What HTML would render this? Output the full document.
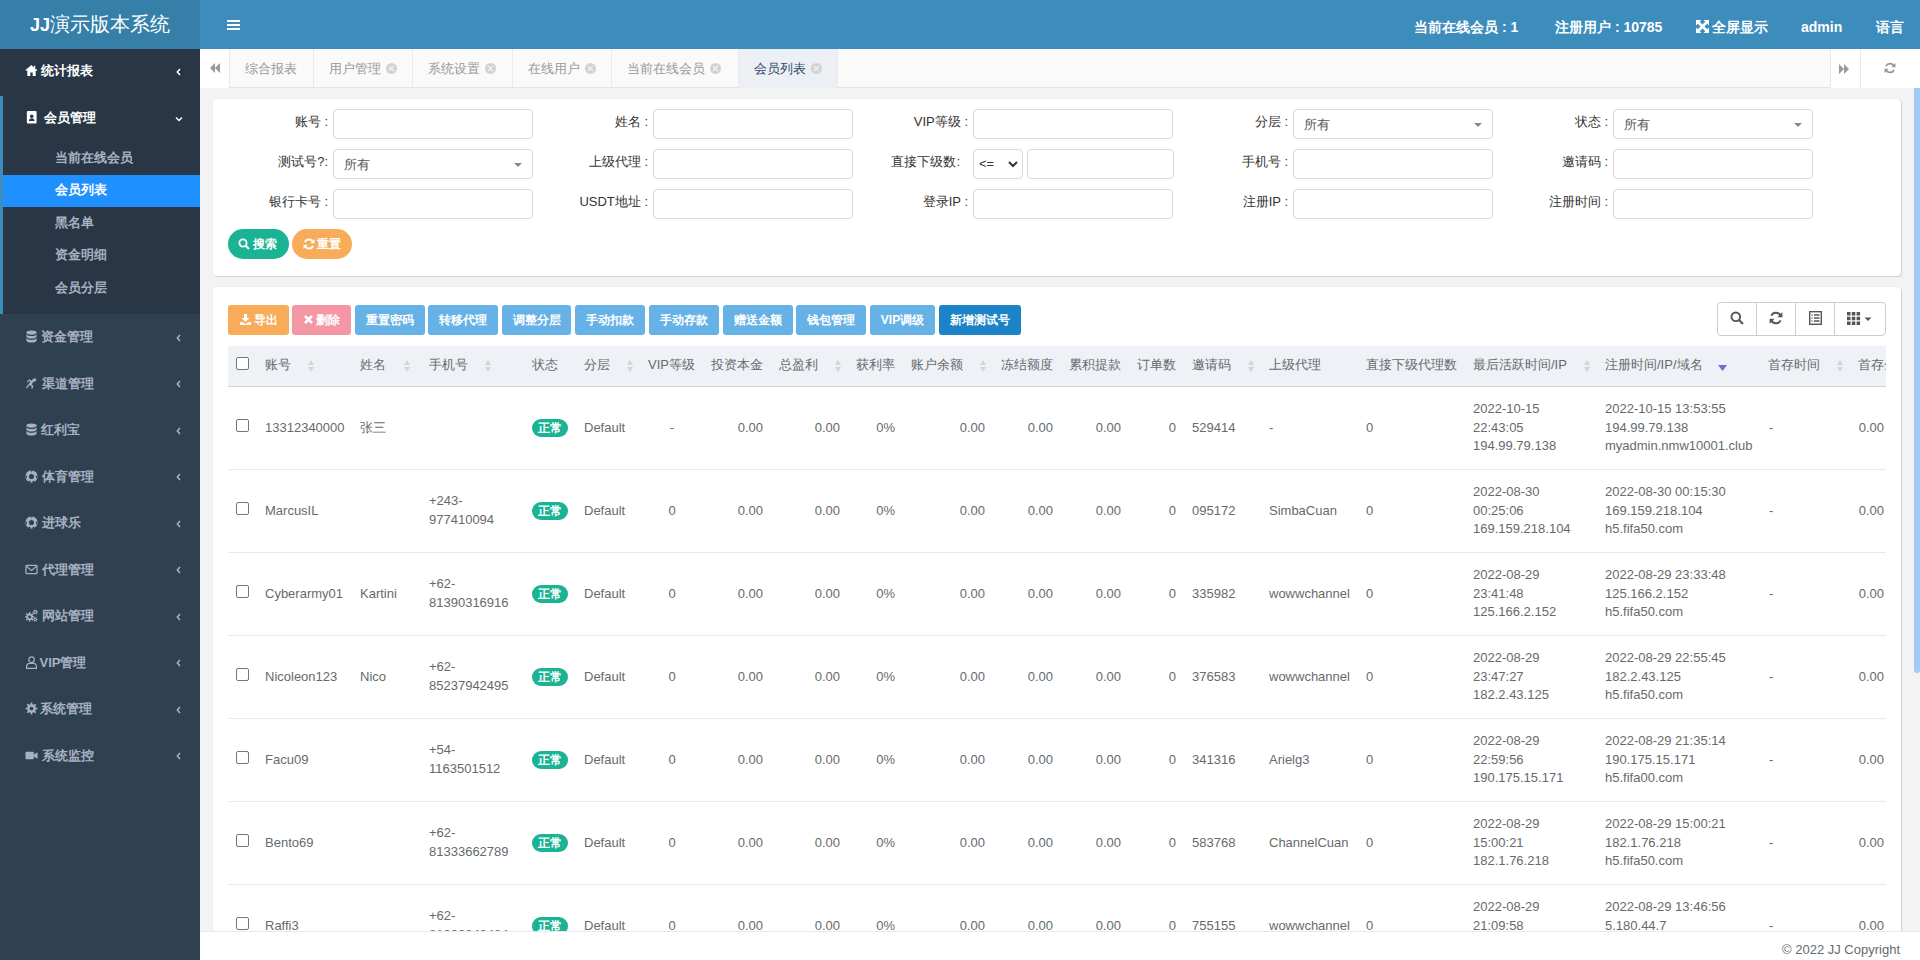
<!DOCTYPE html><html><head><meta charset="utf-8"><title>会员列表</title><style>
*{box-sizing:border-box;margin:0;padding:0}
html,body{width:1920px;height:960px;overflow:hidden;background:#f3f3f4}
body{position:relative;font-family:"Liberation Sans",sans-serif;font-size:13px;color:#676a6c;line-height:1.42857}
.a{position:absolute}
#logo{left:0;top:0;width:200px;height:49px;background:#367fa9;color:#fff;font-size:20px;line-height:49px;text-align:center;white-space:nowrap}
#logo b{font-weight:bold;font-size:18px;letter-spacing:0px}
#nav{left:200px;top:0;width:1720px;height:49px;background:#3c8dbc}
.nt{color:#fff;font-weight:bold;font-size:14px;top:17px;line-height:20px;white-space:nowrap}
#side{left:0;top:49px;width:200px;height:911px;background:#2f4050}
#sdark{left:0;top:49px;width:200px;height:265px;background:#283646}
#sbord{left:0;top:96px;width:3px;height:218px;background:#3c8dbc}
#sact{left:3px;top:174.5px;width:197px;height:32.5px;background:#1e90ff}
.mi{left:0;width:200px;color:#a7b1c2;font-weight:bold;font-size:13px;line-height:20px;white-space:nowrap}
.mi .ic{position:absolute;left:25px;top:3px;width:13px;height:13px}
.mi .tx{position:absolute;left:41px;top:0}
.mi .ar{position:absolute;left:174px;top:5.5px;width:10px;height:10px}
.sub{left:55px;color:#a7b1c2;font-size:13px;line-height:20px;white-space:nowrap;font-weight:bold}
#tabs{left:200px;top:49px;width:1720px;height:39px;background:#fafafa;border-bottom:1px solid #e4e4e4}
.tab{top:49px;height:39px;border-left:1px solid #eaeaea;color:#999;font-size:13px;line-height:39px;white-space:nowrap;padding-left:15px}
.tab .x{display:inline-block;width:11px;height:11px;border-radius:50%;background:#d2d2d2;position:relative;top:1px;margin-left:5px}
.tab .x:before,.tab .x:after{content:"";position:absolute;left:5px;top:2px;width:1.4px;height:7px;background:#fafafa;transform:rotate(45deg)}
.tab .x:after{transform:rotate(-45deg)}
#cont{left:200px;top:88px;width:1720px;height:843px;background:#f3f3f4;overflow:hidden}
.box{background:#fff;border-radius:4px;box-shadow:1px 1px 1px rgba(0,0,0,.13),0 0 1px rgba(0,0,0,.12)}
.lbl{color:#333;font-size:13px;line-height:20px;text-align:right;white-space:nowrap}
.inp{height:30px;border:1px solid #d9d9d9;border-radius:4px;background:#fff}
.sel{color:#555;font-size:13px;line-height:30px;padding-left:10px}
.sel i{position:absolute;right:10px;top:13px;width:0;height:0;border-left:4px solid transparent;border-right:4px solid transparent;border-top:4px solid #888}
.pill{height:30px;border-radius:15px;color:#fff;font-weight:bold;font-size:12px;line-height:30px;white-space:nowrap}
.btn{top:305px;height:30px;border-radius:3px;color:#fff;font-size:12px;line-height:30px;text-align:center;white-space:nowrap;font-weight:bold}
.info{background:#66b2e6}
.th{top:346px;height:41px;line-height:20px;color:#676a6c;white-space:nowrap}
.srt{width:7px;height:13px;top:360px}
.srt:before{content:"";position:absolute;left:0;top:0;border-left:3.5px solid transparent;border-right:3.5px solid transparent;border-bottom:5px solid #d4d4d4}
.srt:after{content:"";position:absolute;left:0;top:7px;border-left:3.5px solid transparent;border-right:3.5px solid transparent;border-top:5px solid #d4d4d4}
.td{white-space:nowrap;line-height:18.57px;color:#676a6c}
.r{text-align:right}
.cb{width:13px;height:13px;border:1px solid #767676;border-radius:2px;background:#fff}
.bdg{width:36px;height:18px;border-radius:9px;background:#1ab394;color:#fff;font-weight:bold;font-size:12px;line-height:18px;text-align:center}
.sep{left:228px;width:1658px;height:1px;background:#e7eaec}
</style></head><body><div id="logo" class="a"><b>JJ</b>演示版本系统</div>
<div id="nav" class="a"></div>
<div class="a" style="left:227px;top:20px;width:13px;height:2px;background:#fff"></div>
<div class="a" style="left:227px;top:24px;width:13px;height:2px;background:#fff"></div>
<div class="a" style="left:227px;top:28px;width:13px;height:2px;background:#fff"></div>
<div class="a nt" style="left:1414px">当前在线会员 : 1</div>
<div class="a nt" style="left:1555px">注册用户 : 10785</div>
<div class="a nt" style="left:1696px"><span style="display:inline-block;width:13px;height:13px;position:relative;top:1px;margin-right:3px"><svg width="13" height="13" viewBox="0 0 13 13"><path d="M0 0h5.5L0 5.5zM13 0v5.5L7.5 0zM0 13V7.5L5.5 13zM13 13H7.5L13 7.5z" fill="#fff"/><path d="M2 2l9 9M11 2 2 11" stroke="#fff" stroke-width="2.8"/></svg></span>全屏显示</div>
<div class="a nt" style="left:1801px">admin</div>
<div class="a nt" style="left:1876px">语言</div>
<div id="side" class="a"></div><div id="sdark" class="a"></div><div id="sbord" class="a"></div><div id="sact" class="a"></div>
<div class="a mi" style="top:61px;color:#fff"><svg class="ic" viewBox="0 0 14 14"><path d="M7 1 0.5 6.5 1.5 7.5 2.5 6.7V13h3.2V9.2h2.6V13h3.2V6.7l1 .8 1-1L11 5V2H9.5v1.7z" fill="#fff"/></svg><span class="tx" style="left:41px">统计报表</span><svg class="ar" viewBox="0 0 10 10"><path d="M6 2 3.3 5 6 8" stroke="#fff" stroke-width="1.5" fill="none"/></svg></div>
<div class="a mi" style="top:108px;color:#fff"><svg class="ic" viewBox="0 0 14 14"><rect x="2" y="0" width="10.5" height="13.5" rx="1.2" fill="#fff"/><circle cx="7.25" cy="5.6" r="1.9" fill="#283646"/><path d="M4.2 10.8c0-2 1.3-3 3.05-3s3.05 1 3.05 3z" fill="#283646"/></svg><span class="tx" style="left:44px">会员管理</span><svg class="ar" viewBox="0 0 10 10"><path d="M2 3.5 5 6.5l3-3" stroke="#fff" stroke-width="1.5" fill="none"/></svg></div>
<div class="a sub" style="top:148px;color:#a7b1c2">当前在线会员</div>
<div class="a sub" style="top:180px;color:#fff">会员列表</div>
<div class="a sub" style="top:213px;color:#a7b1c2">黑名单</div>
<div class="a sub" style="top:245px;color:#a7b1c2">资金明细</div>
<div class="a sub" style="top:278px;color:#a7b1c2">会员分层</div>
<div class="a mi" style="top:327.00px"><svg class="ic" viewBox="0 0 14 14"><ellipse cx="7" cy="2.8" rx="5.5" ry="2.2" fill="#a7b1c2"/><path d="M1.5 4.2c0 1.2 2.5 2.2 5.5 2.2s5.5-1 5.5-2.2V7c0 1.2-2.5 2.2-5.5 2.2S1.5 8.2 1.5 7z" fill="#a7b1c2"/><path d="M1.5 8.4c0 1.2 2.5 2.2 5.5 2.2s5.5-1 5.5-2.2v2.8c0 1.2-2.5 2.2-5.5 2.2s-5.5-1-5.5-2.2z" fill="#a7b1c2"/></svg><span class="tx" style="left:40.5px">资金管理</span><svg class="ar" viewBox="0 0 10 10"><path d="M6 2 3.3 5 6 8" stroke="#a7b1c2" stroke-width="1.5" fill="none"/></svg></div>
<div class="a mi" style="top:373.55px"><svg class="ic" viewBox="0 0 14 14"><path d="M9 1.5 12.5 2 11 5.5 9.5 4.5 7 8l2 1.5-1 3.5-1.3-.4.6-2.4L5 8.5 2 12.5 1 11.7 5.5 5.5 4.5 4 2.5 6 1.7 5.2 4.5 2.5 7 4z" fill="#a7b1c2"/></svg><span class="tx" style="left:42px">渠道管理</span><svg class="ar" viewBox="0 0 10 10"><path d="M6 2 3.3 5 6 8" stroke="#a7b1c2" stroke-width="1.5" fill="none"/></svg></div>
<div class="a mi" style="top:420.10px"><svg class="ic" viewBox="0 0 14 14"><ellipse cx="7" cy="2.8" rx="5.5" ry="2.2" fill="#a7b1c2"/><path d="M1.5 4.2c0 1.2 2.5 2.2 5.5 2.2s5.5-1 5.5-2.2V7c0 1.2-2.5 2.2-5.5 2.2S1.5 8.2 1.5 7z" fill="#a7b1c2"/><path d="M1.5 8.4c0 1.2 2.5 2.2 5.5 2.2s5.5-1 5.5-2.2v2.8c0 1.2-2.5 2.2-5.5 2.2s-5.5-1-5.5-2.2z" fill="#a7b1c2"/></svg><span class="tx" style="left:40.5px">红利宝</span><svg class="ar" viewBox="0 0 10 10"><path d="M6 2 3.3 5 6 8" stroke="#a7b1c2" stroke-width="1.5" fill="none"/></svg></div>
<div class="a mi" style="top:466.65px"><svg class="ic" viewBox="0 0 14 14"><circle cx="7" cy="7" r="6.6" fill="#a7b1c2"/><path d="M7 3.9 10 6.1 8.85 9.6H5.15L4 6.1z" fill="#2f4050"/><path d="M5 .7 7 2 9 .7A6.6 6.6 0 0 0 5 .7zM13.3 5.5 11.7 6.6 12.3 9.7A6.6 6.6 0 0 0 13.3 5.5zM10.6 12.6 8.8 11.4 7.6 13.5A6.6 6.6 0 0 0 10.6 12.6zM3.4 12.6 5.2 11.4 6.4 13.5A6.6 6.6 0 0 1 3.4 12.6zM.7 5.5 2.3 6.6 1.7 9.7A6.6 6.6 0 0 1 .7 5.5z" fill="#2f4050"/></svg><span class="tx" style="left:42px">体育管理</span><svg class="ar" viewBox="0 0 10 10"><path d="M6 2 3.3 5 6 8" stroke="#a7b1c2" stroke-width="1.5" fill="none"/></svg></div>
<div class="a mi" style="top:513.20px"><svg class="ic" viewBox="0 0 14 14"><circle cx="7" cy="7" r="6.6" fill="#a7b1c2"/><path d="M7 3.9 10 6.1 8.85 9.6H5.15L4 6.1z" fill="#2f4050"/><path d="M5 .7 7 2 9 .7A6.6 6.6 0 0 0 5 .7zM13.3 5.5 11.7 6.6 12.3 9.7A6.6 6.6 0 0 0 13.3 5.5zM10.6 12.6 8.8 11.4 7.6 13.5A6.6 6.6 0 0 0 10.6 12.6zM3.4 12.6 5.2 11.4 6.4 13.5A6.6 6.6 0 0 1 3.4 12.6zM.7 5.5 2.3 6.6 1.7 9.7A6.6 6.6 0 0 1 .7 5.5z" fill="#2f4050"/></svg><span class="tx" style="left:42px">进球乐</span><svg class="ar" viewBox="0 0 10 10"><path d="M6 2 3.3 5 6 8" stroke="#a7b1c2" stroke-width="1.5" fill="none"/></svg></div>
<div class="a mi" style="top:559.75px"><svg class="ic" viewBox="0 0 14 14"><rect x="1" y="2.5" width="12" height="9" rx="1" fill="none" stroke="#a7b1c2" stroke-width="1.3"/><path d="M1.5 3.5 7 8l5.5-4.5" fill="none" stroke="#a7b1c2" stroke-width="1.3"/></svg><span class="tx" style="left:42px">代理管理</span><svg class="ar" viewBox="0 0 10 10"><path d="M6 2 3.3 5 6 8" stroke="#a7b1c2" stroke-width="1.5" fill="none"/></svg></div>
<div class="a mi" style="top:606.30px"><svg class="ic" viewBox="0 0 14 14"><path d="M8.63 7.78 10.15 7.79 10.15 9.21 8.63 9.22 8.08 10.56 9.15 11.64 8.14 12.65 7.06 11.58 5.72 12.13 5.71 13.65 4.29 13.65 4.28 12.13 2.94 11.58 1.86 12.65 0.85 11.64 1.92 10.56 1.37 9.22 -0.15 9.21 -0.15 7.79 1.37 7.78 1.92 6.44 0.85 5.36 1.86 4.35 2.94 5.42 4.28 4.87 4.29 3.35 5.71 3.35 5.72 4.87 7.06 5.42 8.14 4.35 9.15 5.36 8.08 6.44z" fill="#a7b1c2"/><circle cx="5" cy="8.5" r="1.6" fill="#2f4050"/><path d="M12.93 2.68 13.85 2.67 13.85 3.73 12.93 3.72 12.41 4.61 12.88 5.41 11.97 5.93 11.52 5.13 10.48 5.13 10.03 5.93 9.12 5.41 9.59 4.61 9.07 3.72 8.15 3.73 8.15 2.67 9.07 2.68 9.59 1.79 9.12 0.99 10.03 0.47 10.48 1.27 11.52 1.27 11.97 0.47 12.88 0.99 12.41 1.79z" fill="#a7b1c2"/><circle cx="11" cy="3.2" r="0.9" fill="#2f4050"/><path d="M12.74 10.73 13.56 10.73 13.56 11.67 12.74 11.67 12.27 12.47 12.69 13.18 11.87 13.65 11.47 12.94 10.53 12.94 10.13 13.65 9.31 13.18 9.73 12.47 9.26 11.67 8.44 11.67 8.44 10.73 9.26 10.73 9.73 9.93 9.31 9.22 10.13 8.75 10.53 9.46 11.47 9.46 11.87 8.75 12.69 9.22 12.27 9.93z" fill="#a7b1c2"/><circle cx="11" cy="11.2" r="0.8" fill="#2f4050"/></svg><span class="tx" style="left:42px">网站管理</span><svg class="ar" viewBox="0 0 10 10"><path d="M6 2 3.3 5 6 8" stroke="#a7b1c2" stroke-width="1.5" fill="none"/></svg></div>
<div class="a mi" style="top:652.85px"><svg class="ic" viewBox="0 0 14 14"><circle cx="7" cy="4" r="3" fill="none" stroke="#a7b1c2" stroke-width="1.3"/><path d="M1.7 13.3v-2.2a3.2 3.2 0 0 1 3.2-3.2h4.2a3.2 3.2 0 0 1 3.2 3.2v2.2z" fill="none" stroke="#a7b1c2" stroke-width="1.3"/></svg><span class="tx" style="left:39.5px">VIP管理</span><svg class="ar" viewBox="0 0 10 10"><path d="M6 2 3.3 5 6 8" stroke="#a7b1c2" stroke-width="1.5" fill="none"/></svg></div>
<div class="a mi" style="top:699.40px"><svg class="ic" viewBox="0 0 14 14"><path d="M11.71 6.06 13.44 6.11 13.44 7.89 11.71 7.94 10.99 9.67 12.18 10.92 10.92 12.18 9.67 10.99 7.94 11.71 7.89 13.44 6.11 13.44 6.06 11.71 4.33 10.99 3.08 12.18 1.82 10.92 3.01 9.67 2.29 7.94 0.56 7.89 0.56 6.11 2.29 6.06 3.01 4.33 1.82 3.08 3.08 1.82 4.33 3.01 6.06 2.29 6.11 0.56 7.89 0.56 7.94 2.29 9.67 3.01 10.92 1.82 12.18 3.08 10.99 4.33z" fill="#a7b1c2"/><circle cx="7" cy="7" r="2.0" fill="#2f4050"/></svg><span class="tx" style="left:40px">系统管理</span><svg class="ar" viewBox="0 0 10 10"><path d="M6 2 3.3 5 6 8" stroke="#a7b1c2" stroke-width="1.5" fill="none"/></svg></div>
<div class="a mi" style="top:745.95px"><svg class="ic" viewBox="0 0 14 14"><rect x="0.5" y="3" width="9" height="8" rx="1" fill="#a7b1c2"/><path d="M9.5 6 13.5 3.5v7L9.5 8z" fill="#a7b1c2"/></svg><span class="tx" style="left:42px">系统监控</span><svg class="ar" viewBox="0 0 10 10"><path d="M6 2 3.3 5 6 8" stroke="#a7b1c2" stroke-width="1.5" fill="none"/></svg></div>
<div id="tabs" class="a"></div>
<div class="a" style="left:200px;top:49px;width:29px;height:39px;background:#fff"></div>
<svg class="a" style="left:209px;top:62px" width="12" height="12" viewBox="0 0 12 12"><path d="M6 1 1 6l5 5zM11 1 6 6l5 5z" fill="#999"/></svg>
<div class="a tab" style="left:229px;width:84px;">综合报表</div>
<div class="a tab" style="left:313px;width:99px;">用户管理<span class="x"></span></div>
<div class="a tab" style="left:412px;width:100px;">系统设置<span class="x"></span></div>
<div class="a tab" style="left:512px;width:99px;">在线用户<span class="x"></span></div>
<div class="a tab" style="left:611px;width:127px;">当前在线会员<span class="x"></span></div>
<div class="a tab" style="left:738px;width:99px;background:#eceff3;color:#2e4b70;">会员列表<span class="x"></span></div>
<div class="a" style="left:837px;top:49px;width:1px;height:39px;background:#eaeaea"></div>
<div class="a" style="left:1830px;top:49px;width:90px;height:39px;background:#fff;border-left:1px solid #eaeaea"></div>
<div class="a" style="left:1860px;top:49px;width:1px;height:39px;background:#eaeaea"></div>
<svg class="a" style="left:1838px;top:63px" width="12" height="12" viewBox="0 0 12 12"><path d="M1 1l5 5-5 5zM6 1l5 5-5 5z" fill="#999"/></svg>
<svg class="a" style="left:1884px;top:62px" width="12" height="12" viewBox="0 0 12 12"><path d="M10.2 4.5A4.5 4.5 0 0 0 2 4M1.8 7.5A4.5 4.5 0 0 0 10 8" stroke="#999" stroke-width="1.8" fill="none"/><path d="M11.5 1v4.2H7.3zM.5 11V6.8h4.2z" fill="#999"/></svg>
<div id="cont" class="a"></div>
<div class="a box" style="left:213px;top:99px;width:1688px;height:177px"></div>
<div class="a lbl" style="left:213px;width:115px;top:111.8px">账号 :</div>
<div class="a inp" style="left:333px;top:109px;width:200px"></div>
<div class="a lbl" style="left:533px;width:115px;top:111.8px">姓名 :</div>
<div class="a inp" style="left:653px;top:109px;width:200px"></div>
<div class="a lbl" style="left:853px;width:115px;top:111.8px">VIP等级 :</div>
<div class="a inp" style="left:973px;top:109px;width:200px"></div>
<div class="a lbl" style="left:1173px;width:115px;top:111.8px">分层 :</div>
<div class="a inp sel" style="left:1293px;top:109px;width:200px">所有<i></i></div>
<div class="a lbl" style="left:1493px;width:115px;top:111.8px">状态 :</div>
<div class="a inp sel" style="left:1613px;top:109px;width:200px">所有<i></i></div>
<div class="a lbl" style="left:213px;width:115px;top:151.8px">测试号?:</div>
<div class="a inp sel" style="left:333px;top:149px;width:200px">所有<i></i></div>
<div class="a lbl" style="left:533px;width:115px;top:151.8px">上级代理 :</div>
<div class="a inp" style="left:653px;top:149px;width:200px"></div>
<div class="a lbl" style="left:853px;width:107px;top:151.8px">直接下级数:</div>
<div class="a inp" style="left:973px;top:149px;width:50px;font-size:13px;color:#333;line-height:28px;padding-left:5px">&lt;=<svg style="position:absolute;left:34px;top:10px" width="10" height="8" viewBox="0 0 10 8"><path d="M1 2l4 4 4-4" stroke="#333" stroke-width="2" fill="none"/></svg></div>
<div class="a inp" style="left:1027px;top:149px;width:147px"></div>
<div class="a lbl" style="left:1173px;width:115px;top:151.8px">手机号 :</div>
<div class="a inp" style="left:1293px;top:149px;width:200px"></div>
<div class="a lbl" style="left:1493px;width:115px;top:151.8px">邀请码 :</div>
<div class="a inp" style="left:1613px;top:149px;width:200px"></div>
<div class="a lbl" style="left:213px;width:115px;top:191.8px">银行卡号 :</div>
<div class="a inp" style="left:333px;top:189px;width:200px"></div>
<div class="a lbl" style="left:533px;width:115px;top:191.8px">USDT地址 :</div>
<div class="a inp" style="left:653px;top:189px;width:200px"></div>
<div class="a lbl" style="left:853px;width:115px;top:191.8px">登录IP :</div>
<div class="a inp" style="left:973px;top:189px;width:200px"></div>
<div class="a lbl" style="left:1173px;width:115px;top:191.8px">注册IP :</div>
<div class="a inp" style="left:1293px;top:189px;width:200px"></div>
<div class="a lbl" style="left:1493px;width:115px;top:191.8px">注册时间 :</div>
<div class="a inp" style="left:1613px;top:189px;width:200px"></div>
<div class="a pill" style="left:228px;top:229px;width:61px;background:#1ab394"><svg style="position:absolute;left:10px;top:9px" width="12" height="12" viewBox="0 0 12 12"><circle cx="5" cy="5" r="3.6" stroke="#fff" stroke-width="1.8" fill="none"/><path d="M7.5 7.5 11 11" stroke="#fff" stroke-width="2"/></svg><span style="position:absolute;left:25px">搜索</span></div>
<div class="a pill" style="left:292px;top:229px;width:60px;background:#f8ac59"><svg style="position:absolute;left:11px;top:9px" width="12" height="12" viewBox="0 0 12 12"><path d="M10.2 4.5A4.5 4.5 0 0 0 2 4M1.8 7.5A4.5 4.5 0 0 0 10 8" stroke="#fff" stroke-width="2" fill="none"/><path d="M11.5 1v4.2H7.3zM.5 11V6.8h4.2z" fill="#fff"/></svg><span style="position:absolute;left:25px">重置</span></div>
<div class="a box" style="left:213px;top:287px;width:1688px;height:700px"></div>
<div class="a btn" style="left:228px;width:61px;background:#f8ac59;"><svg style="display:inline-block;vertical-align:-1px;margin-right:3px" width="11" height="11" viewBox="0 0 11 11"><path d="M4 0h3v4h2.5L5.5 8 1.5 4H4zM0 8h2.5l3 2 3-2H11v3H0z" fill="#fff"/></svg>导出</div>
<div class="a btn" style="left:292px;width:59px;background:#f496a3;"><svg style="display:inline-block;vertical-align:0px;margin-right:3px" width="9" height="9" viewBox="0 0 9 9"><path d="M1 1l7 7M8 1 1 8" stroke="#fff" stroke-width="2.6"/></svg>删除</div>
<div class="a btn info" style="left:355px;width:70px;">重置密码</div>
<div class="a btn info" style="left:428px;width:70px;">转移代理</div>
<div class="a btn info" style="left:502px;width:69px;">调整分层</div>
<div class="a btn info" style="left:575px;width:70px;">手动扣款</div>
<div class="a btn info" style="left:649px;width:70px;">手动存款</div>
<div class="a btn info" style="left:723px;width:70px;">赠送金额</div>
<div class="a btn info" style="left:796px;width:70px;">钱包管理</div>
<div class="a btn info" style="left:870px;width:65px;">VIP调级</div>
<div class="a btn" style="left:939px;width:82px;background:#1c84c6;">新增测试号</div>
<div class="a" style="left:1717px;top:302px;width:169px;height:34px;border:1px solid #ccc;border-radius:4px;background:#fff"></div>
<div class="a" style="left:1756px;top:303px;width:1px;height:32px;background:#ccc"></div>
<div class="a" style="left:1795px;top:303px;width:1px;height:32px;background:#ccc"></div>
<div class="a" style="left:1834px;top:303px;width:1px;height:32px;background:#ccc"></div>
<svg class="a" style="left:1730px;top:311px" width="14" height="14" viewBox="0 0 14 14"><circle cx="5.8" cy="5.8" r="4.3" stroke="#555" stroke-width="1.9" fill="none"/><path d="M9 9l4 4" stroke="#555" stroke-width="2.2"/></svg>
<svg class="a" style="left:1769px;top:311px" width="14" height="14" viewBox="0 0 14 14"><path d="M11.8 5.2A5.2 5.2 0 0 0 2.3 4.6M2.2 8.8A5.2 5.2 0 0 0 11.7 9.4" stroke="#555" stroke-width="2" fill="none"/><path d="M13.4 1.2v5H8.4zM.6 12.8v-5h5z" fill="#555"/></svg>
<svg class="a" style="left:1809px;top:311px" width="13" height="14" viewBox="0 0 13 14"><rect x=".7" y=".7" width="11.6" height="12.6" fill="none" stroke="#555" stroke-width="1.4"/><path d="M2.5 4h1M5 4h5.5M2.5 7h1M5 7h5.5M2.5 10h1M5 10h5.5" stroke="#555" stroke-width="1.3"/></svg>
<svg class="a" style="left:1847px;top:312px" width="28" height="13" viewBox="0 0 28 13"><path d="M0 0h3.5v3.5H0zM4.8 0h3.5v3.5H4.8zM9.6 0h3.5v3.5H9.6zM0 4.8h3.5v3.5H0zM4.8 4.8h3.5v3.5H4.8zM9.6 4.8h3.5v3.5H9.6zM0 9.6h3.5v3.5H0zM4.8 9.6h3.5v3.5H4.8zM9.6 9.6h3.5v3.5H9.6z" fill="#555"/><path d="M17.5 5.5h7l-3.5 3.5z" fill="#555"/></svg>
<div class="a" style="left:228px;top:346px;width:1658px;height:585px;overflow:hidden">
<div class="a" style="left:0px;top:0px;width:1658px;height:41px;background:#eef1f6;border-bottom:1px solid #d2d5d9"></div>
<div class="a cb" style="left:8px;top:11px"></div>
<div class="a th" style="left:37px;top:9px">账号</div>
<div class="a srt" style="left:80px;top:14px"></div>
<div class="a th" style="left:132px;top:9px">姓名</div>
<div class="a srt" style="left:176px;top:14px"></div>
<div class="a th" style="left:201px;top:9px">手机号</div>
<div class="a srt" style="left:257px;top:14px"></div>
<div class="a th" style="left:304px;top:9px">状态</div>
<div class="a th" style="left:356px;top:9px">分层</div>
<div class="a srt" style="left:399px;top:14px"></div>
<div class="a th" style="left:420px;top:9px">VIP等级</div>
<div class="a th" style="left:483px;top:9px">投资本金</div>
<div class="a th" style="left:551px;top:9px">总盈利</div>
<div class="a srt" style="left:607px;top:14px"></div>
<div class="a th" style="left:628px;top:9px">获利率</div>
<div class="a th" style="left:683px;top:9px">账户余额</div>
<div class="a srt" style="left:752px;top:14px"></div>
<div class="a th" style="left:773px;top:9px">冻结额度</div>
<div class="a th" style="left:841px;top:9px">累积提款</div>
<div class="a th" style="left:909px;top:9px">订单数</div>
<div class="a th" style="left:964px;top:9px">邀请码</div>
<div class="a srt" style="left:1020px;top:14px"></div>
<div class="a th" style="left:1041px;top:9px">上级代理</div>
<div class="a th" style="left:1138px;top:9px">直接下级代理数</div>
<div class="a th" style="left:1245px;top:9px">最后活跃时间/IP</div>
<div class="a srt" style="left:1356px;top:14px"></div>
<div class="a th" style="left:1377px;top:9px">注册时间/IP/域名</div>
<div class="a th" style="left:1540px;top:9px">首存时间</div>
<div class="a srt" style="left:1609px;top:14px"></div>
<div class="a th" style="left:1630px;top:9px">首存金额</div>
<svg class="a" style="left:1490px;top:18px" width="9" height="8" viewBox="0 0 9 8"><path d="M0 1h9L4.5 7z" fill="#6f6cd8"/></svg>
<div class="a cb" style="left:8px;top:73px"></div>
<div class="a td" style="left:37px;top:72.51499999999999px">13312340000</div>
<div class="a td" style="left:132px;top:72.51499999999999px">张三</div>
<div class="a bdg" style="left:304px;top:73px">正常</div>
<div class="a td" style="left:356px;top:72.51499999999999px">Default</div>
<div class="a td" style="left:394px;top:72.51499999999999px;width:100px;text-align:center">-</div>
<div class="a td r" style="left:435px;top:72.51499999999999px;width:100px">0.00</div>
<div class="a td r" style="left:512px;top:72.51499999999999px;width:100px">0.00</div>
<div class="a td r" style="left:567px;top:72.51499999999999px;width:100px">0%</div>
<div class="a td r" style="left:657px;top:72.51499999999999px;width:100px">0.00</div>
<div class="a td r" style="left:725px;top:72.51499999999999px;width:100px">0.00</div>
<div class="a td r" style="left:793px;top:72.51499999999999px;width:100px">0.00</div>
<div class="a td r" style="left:848px;top:72.51499999999999px;width:100px">0</div>
<div class="a td" style="left:964px;top:72.51499999999999px">529414</div>
<div class="a td" style="left:1041px;top:72.51499999999999px">-</div>
<div class="a td" style="left:1138px;top:72.51499999999999px">0</div>
<div class="a td" style="left:1245px;top:53.94499999999999px;">2022-10-15<br>22:43:05<br>194.99.79.138</div>
<div class="a td" style="left:1377px;top:53.94499999999999px;">2022-10-15 13:53:55<br>194.99.79.138<br>myadmin.nmw10001.club</div>
<div class="a td" style="left:1541px;top:72.51499999999999px">-</div>
<div class="a td r" style="left:1556px;top:72.51499999999999px;width:100px">0.00</div>
<div class="a sep" style="left:0px;top:123px"></div>
<div class="a cb" style="left:8px;top:156px"></div>
<div class="a td" style="left:37px;top:155.515px">MarcusIL</div>
<div class="a td" style="left:201px;top:146.23000000000002px;">+243-<br>977410094</div>
<div class="a bdg" style="left:304px;top:156px">正常</div>
<div class="a td" style="left:356px;top:155.515px">Default</div>
<div class="a td" style="left:394px;top:155.515px;width:100px;text-align:center">0</div>
<div class="a td r" style="left:435px;top:155.515px;width:100px">0.00</div>
<div class="a td r" style="left:512px;top:155.515px;width:100px">0.00</div>
<div class="a td r" style="left:567px;top:155.515px;width:100px">0%</div>
<div class="a td r" style="left:657px;top:155.515px;width:100px">0.00</div>
<div class="a td r" style="left:725px;top:155.515px;width:100px">0.00</div>
<div class="a td r" style="left:793px;top:155.515px;width:100px">0.00</div>
<div class="a td r" style="left:848px;top:155.515px;width:100px">0</div>
<div class="a td" style="left:964px;top:155.515px">095172</div>
<div class="a td" style="left:1041px;top:155.515px">SimbaCuan</div>
<div class="a td" style="left:1138px;top:155.515px">0</div>
<div class="a td" style="left:1245px;top:136.945px;">2022-08-30<br>00:25:06<br>169.159.218.104</div>
<div class="a td" style="left:1377px;top:136.945px;">2022-08-30 00:15:30<br>169.159.218.104<br>h5.fifa50.com</div>
<div class="a td" style="left:1541px;top:155.515px">-</div>
<div class="a td r" style="left:1556px;top:155.515px;width:100px">0.00</div>
<div class="a sep" style="left:0px;top:206px"></div>
<div class="a cb" style="left:8px;top:239px"></div>
<div class="a td" style="left:37px;top:238.515px">Cyberarmy01</div>
<div class="a td" style="left:132px;top:238.515px">Kartini</div>
<div class="a td" style="left:201px;top:229.2299999999999px;">+62-<br>81390316916</div>
<div class="a bdg" style="left:304px;top:239px">正常</div>
<div class="a td" style="left:356px;top:238.515px">Default</div>
<div class="a td" style="left:394px;top:238.515px;width:100px;text-align:center">0</div>
<div class="a td r" style="left:435px;top:238.515px;width:100px">0.00</div>
<div class="a td r" style="left:512px;top:238.515px;width:100px">0.00</div>
<div class="a td r" style="left:567px;top:238.515px;width:100px">0%</div>
<div class="a td r" style="left:657px;top:238.515px;width:100px">0.00</div>
<div class="a td r" style="left:725px;top:238.515px;width:100px">0.00</div>
<div class="a td r" style="left:793px;top:238.515px;width:100px">0.00</div>
<div class="a td r" style="left:848px;top:238.515px;width:100px">0</div>
<div class="a td" style="left:964px;top:238.515px">335982</div>
<div class="a td" style="left:1041px;top:238.515px">wowwchannel</div>
<div class="a td" style="left:1138px;top:238.515px">0</div>
<div class="a td" style="left:1245px;top:219.94499999999994px;">2022-08-29<br>23:41:48<br>125.166.2.152</div>
<div class="a td" style="left:1377px;top:219.94499999999994px;">2022-08-29 23:33:48<br>125.166.2.152<br>h5.fifa50.com</div>
<div class="a td" style="left:1541px;top:238.515px">-</div>
<div class="a td r" style="left:1556px;top:238.515px;width:100px">0.00</div>
<div class="a sep" style="left:0px;top:289px"></div>
<div class="a cb" style="left:8px;top:322px"></div>
<div class="a td" style="left:37px;top:321.515px">Nicoleon123</div>
<div class="a td" style="left:132px;top:321.515px">Nico</div>
<div class="a td" style="left:201px;top:312.2299999999999px;">+62-<br>85237942495</div>
<div class="a bdg" style="left:304px;top:322px">正常</div>
<div class="a td" style="left:356px;top:321.515px">Default</div>
<div class="a td" style="left:394px;top:321.515px;width:100px;text-align:center">0</div>
<div class="a td r" style="left:435px;top:321.515px;width:100px">0.00</div>
<div class="a td r" style="left:512px;top:321.515px;width:100px">0.00</div>
<div class="a td r" style="left:567px;top:321.515px;width:100px">0%</div>
<div class="a td r" style="left:657px;top:321.515px;width:100px">0.00</div>
<div class="a td r" style="left:725px;top:321.515px;width:100px">0.00</div>
<div class="a td r" style="left:793px;top:321.515px;width:100px">0.00</div>
<div class="a td r" style="left:848px;top:321.515px;width:100px">0</div>
<div class="a td" style="left:964px;top:321.515px">376583</div>
<div class="a td" style="left:1041px;top:321.515px">wowwchannel</div>
<div class="a td" style="left:1138px;top:321.515px">0</div>
<div class="a td" style="left:1245px;top:302.94499999999994px;">2022-08-29<br>23:47:27<br>182.2.43.125</div>
<div class="a td" style="left:1377px;top:302.94499999999994px;">2022-08-29 22:55:45<br>182.2.43.125<br>h5.fifa50.com</div>
<div class="a td" style="left:1541px;top:321.515px">-</div>
<div class="a td r" style="left:1556px;top:321.515px;width:100px">0.00</div>
<div class="a sep" style="left:0px;top:372px"></div>
<div class="a cb" style="left:8px;top:405px"></div>
<div class="a td" style="left:37px;top:404.515px">Facu09</div>
<div class="a td" style="left:201px;top:395.2299999999999px;">+54-<br>1163501512</div>
<div class="a bdg" style="left:304px;top:405px">正常</div>
<div class="a td" style="left:356px;top:404.515px">Default</div>
<div class="a td" style="left:394px;top:404.515px;width:100px;text-align:center">0</div>
<div class="a td r" style="left:435px;top:404.515px;width:100px">0.00</div>
<div class="a td r" style="left:512px;top:404.515px;width:100px">0.00</div>
<div class="a td r" style="left:567px;top:404.515px;width:100px">0%</div>
<div class="a td r" style="left:657px;top:404.515px;width:100px">0.00</div>
<div class="a td r" style="left:725px;top:404.515px;width:100px">0.00</div>
<div class="a td r" style="left:793px;top:404.515px;width:100px">0.00</div>
<div class="a td r" style="left:848px;top:404.515px;width:100px">0</div>
<div class="a td" style="left:964px;top:404.515px">341316</div>
<div class="a td" style="left:1041px;top:404.515px">Arielg3</div>
<div class="a td" style="left:1138px;top:404.515px">0</div>
<div class="a td" style="left:1245px;top:385.94499999999994px;">2022-08-29<br>22:59:56<br>190.175.15.171</div>
<div class="a td" style="left:1377px;top:385.94499999999994px;">2022-08-29 21:35:14<br>190.175.15.171<br>h5.fifa00.com</div>
<div class="a td" style="left:1541px;top:404.515px">-</div>
<div class="a td r" style="left:1556px;top:404.515px;width:100px">0.00</div>
<div class="a sep" style="left:0px;top:455px"></div>
<div class="a cb" style="left:8px;top:488px"></div>
<div class="a td" style="left:37px;top:487.515px">Bento69</div>
<div class="a td" style="left:201px;top:478.2299999999999px;">+62-<br>81333662789</div>
<div class="a bdg" style="left:304px;top:488px">正常</div>
<div class="a td" style="left:356px;top:487.515px">Default</div>
<div class="a td" style="left:394px;top:487.515px;width:100px;text-align:center">0</div>
<div class="a td r" style="left:435px;top:487.515px;width:100px">0.00</div>
<div class="a td r" style="left:512px;top:487.515px;width:100px">0.00</div>
<div class="a td r" style="left:567px;top:487.515px;width:100px">0%</div>
<div class="a td r" style="left:657px;top:487.515px;width:100px">0.00</div>
<div class="a td r" style="left:725px;top:487.515px;width:100px">0.00</div>
<div class="a td r" style="left:793px;top:487.515px;width:100px">0.00</div>
<div class="a td r" style="left:848px;top:487.515px;width:100px">0</div>
<div class="a td" style="left:964px;top:487.515px">583768</div>
<div class="a td" style="left:1041px;top:487.515px">ChannelCuan</div>
<div class="a td" style="left:1138px;top:487.515px">0</div>
<div class="a td" style="left:1245px;top:468.94499999999994px;">2022-08-29<br>15:00:21<br>182.1.76.218</div>
<div class="a td" style="left:1377px;top:468.94499999999994px;">2022-08-29 15:00:21<br>182.1.76.218<br>h5.fifa50.com</div>
<div class="a td" style="left:1541px;top:487.515px">-</div>
<div class="a td r" style="left:1556px;top:487.515px;width:100px">0.00</div>
<div class="a sep" style="left:0px;top:538px"></div>
<div class="a cb" style="left:8px;top:571px"></div>
<div class="a td" style="left:37px;top:570.515px">Raffi3</div>
<div class="a td" style="left:201px;top:561.2299999999999px;">+62-<br>81332842484</div>
<div class="a bdg" style="left:304px;top:571px">正常</div>
<div class="a td" style="left:356px;top:570.515px">Default</div>
<div class="a td" style="left:394px;top:570.515px;width:100px;text-align:center">0</div>
<div class="a td r" style="left:435px;top:570.515px;width:100px">0.00</div>
<div class="a td r" style="left:512px;top:570.515px;width:100px">0.00</div>
<div class="a td r" style="left:567px;top:570.515px;width:100px">0%</div>
<div class="a td r" style="left:657px;top:570.515px;width:100px">0.00</div>
<div class="a td r" style="left:725px;top:570.515px;width:100px">0.00</div>
<div class="a td r" style="left:793px;top:570.515px;width:100px">0.00</div>
<div class="a td r" style="left:848px;top:570.515px;width:100px">0</div>
<div class="a td" style="left:964px;top:570.515px">755155</div>
<div class="a td" style="left:1041px;top:570.515px">wowwchannel</div>
<div class="a td" style="left:1138px;top:570.515px">0</div>
<div class="a td" style="left:1245px;top:551.9449999999999px;">2022-08-29<br>21:09:58<br>5.180.44.7</div>
<div class="a td" style="left:1377px;top:551.9449999999999px;">2022-08-29 13:46:56<br>5.180.44.7<br>h5.fifa50.com</div>
<div class="a td" style="left:1541px;top:570.515px">-</div>
<div class="a td r" style="left:1556px;top:570.515px;width:100px">0.00</div>
<div class="a sep" style="left:0px;top:621px"></div>
</div>
<div class="a" style="left:200px;top:931px;width:1720px;height:29px;background:#fff;border-top:1px solid #e7eaec"></div>
<div class="a" style="left:1700px;top:940px;width:200px;text-align:right;line-height:20px">© 2022 JJ Copyright</div>
<div class="a" style="left:1914px;top:88px;width:6px;height:585px;background:#9ecbf7;border-radius:0 0 3px 3px"></div></body></html>
